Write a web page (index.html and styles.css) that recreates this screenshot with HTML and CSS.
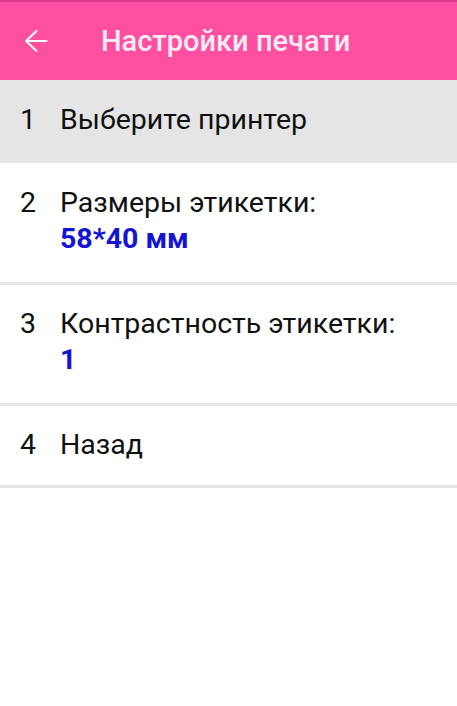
FILE: index.html
```html
<!DOCTYPE html>
<html lang="ru">
<head>
<meta charset="utf-8">
<link rel="stylesheet" href="styles.css">
</head>
<body>
<header class="appbar">
  <svg class="back" width="24" height="24" viewBox="0 0 24 24"><path d="M22.5 12H2M12.5 2L2 12l10.5 10" fill="none" stroke="#fff" stroke-width="2" stroke-linecap="round" stroke-linejoin="round"/></svg>
  <h1 class="title">Настройки печати</h1>
</header>
<main class="list">
  <div class="row row-selected">
    <span class="num">1</span>
    <div class="body"><div class="label">Выберите принтер</div></div>
  </div>
  <div class="row row-size">
    <span class="num">2</span>
    <div class="body"><div class="label">Размеры этикетки:</div><div class="value">58*40 мм</div></div>
  </div>
  <div class="row row-contrast">
    <span class="num">3</span>
    <div class="body"><div class="label">Контрастность этикетки:</div><div class="value">1</div></div>
  </div>
  <div class="row row-back">
    <span class="num">4</span>
    <div class="body"><div class="label">Назад</div></div>
  </div>
</main>
</body>
</html>
```
FILE: styles.css
```css
html, body {
  margin: 0;
  padding: 0;
  background: #ffffff;
  font-family: Roboto, "Noto Sans", sans-serif;
}
.appbar {
  display: flex;
  align-items: center;
  height: 78px;
  background: #ff4fa1;
  border-top: 2px solid #dd3b8d;
}
.back {
  margin-left: 24px;
  flex: none;
}
.title {
  margin: 0 0 0 53px;
  font-size: 29px;
  font-weight: 500;
  color: #fdeaf3;
}
.list {
  display: flex;
  flex-direction: column;
}
.row {
  display: flex;
  padding-left: 20px;
  border-bottom: 3px solid #e6e6e6;
  font-size: 28.5px;
  line-height: 36px;
  color: #111;
}
.row-selected {
  background: #e5e5e5;
  border-bottom: none;
  padding-top: 22px;
  padding-bottom: 25px;
}
.row-size {
  padding-top: 22px;
  padding-bottom: 25px;
}
.row-contrast {
  padding-top: 21px;
  padding-bottom: 25px;
}
.row-back {
  padding-top: 21px;
  padding-bottom: 22px;
}
.num {
  width: 40px;
  flex: none;
}
.value {
  color: #1414d2;
  font-weight: 700;
}
```
